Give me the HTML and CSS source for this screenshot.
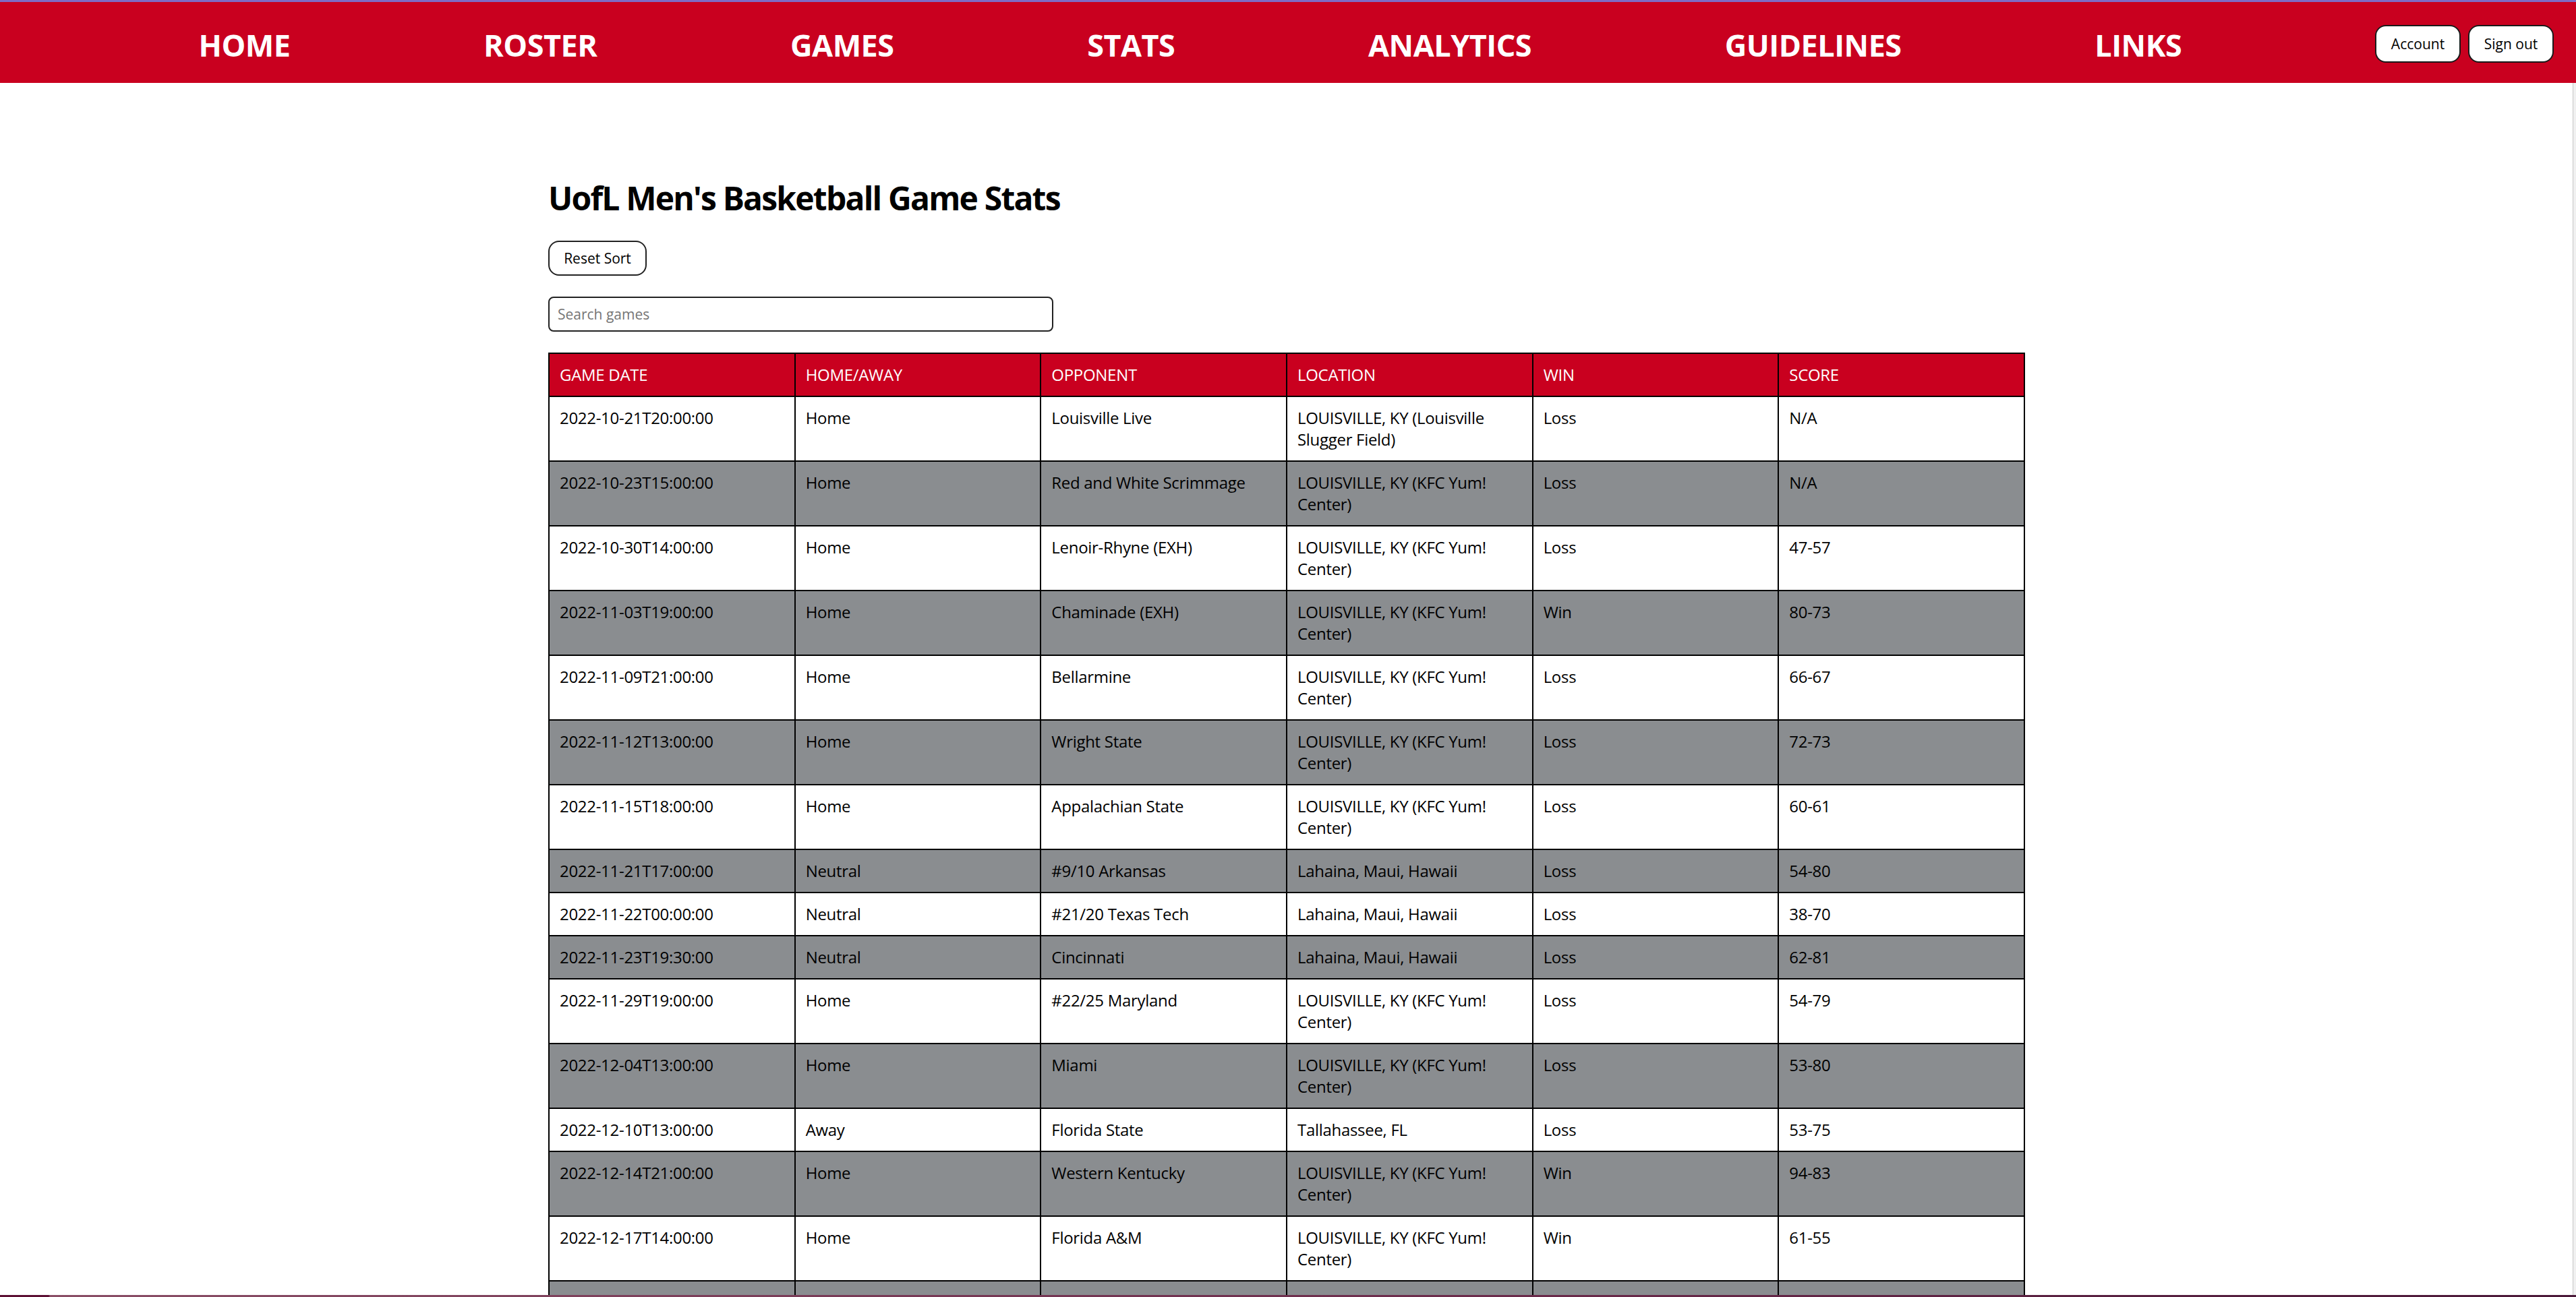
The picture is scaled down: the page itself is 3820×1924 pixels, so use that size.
FILE: index.html
```html
<!DOCTYPE html>
<html lang="en">
<head>
<meta charset="utf-8">
<title>UofL Men's Basketball Game Stats</title>
<link rel="stylesheet" href="styles.css">
</head>
<body>
<header class="topnav">
  <nav class="nav-links">
    <a class="nav-link" href="#">HOME</a>
    <a class="nav-link" href="#">ROSTER</a>
    <a class="nav-link" href="#">GAMES</a>
    <a class="nav-link" href="#">STATS</a>
    <a class="nav-link" href="#">ANALYTICS</a>
    <a class="nav-link" href="#">GUIDELINES</a>
    <a class="nav-link" href="#">LINKS</a>
  </nav>
  <div class="nav-actions">
    <button class="nav-btn">Account</button>
    <button class="nav-btn">Sign out</button>
  </div>
</header>

<div class="content">
<main class="page">
  <h1 class="title">UofL Men's Basketball Game Stats</h1>
  <button class="reset-btn">Reset Sort</button>
  <input class="search" type="text" placeholder="Search games">
  <table class="stats">
    <thead>
      <tr><th>GAME DATE</th><th>HOME/AWAY</th><th>OPPONENT</th><th>LOCATION</th><th>WIN</th><th>SCORE</th></tr>
    </thead>
    <tbody>
      <tr><td>2022-10-21T20:00:00</td><td>Home</td><td>Louisville Live</td><td>LOUISVILLE, KY (Louisville Slugger Field)</td><td>Loss</td><td>N/A</td></tr>
      <tr><td>2022-10-23T15:00:00</td><td>Home</td><td>Red and White Scrimmage</td><td>LOUISVILLE, KY (KFC Yum! Center)</td><td>Loss</td><td>N/A</td></tr>
      <tr><td>2022-10-30T14:00:00</td><td>Home</td><td>Lenoir-Rhyne (EXH)</td><td>LOUISVILLE, KY (KFC Yum! Center)</td><td>Loss</td><td>47-57</td></tr>
      <tr><td>2022-11-03T19:00:00</td><td>Home</td><td>Chaminade (EXH)</td><td>LOUISVILLE, KY (KFC Yum! Center)</td><td>Win</td><td>80-73</td></tr>
      <tr><td>2022-11-09T21:00:00</td><td>Home</td><td>Bellarmine</td><td>LOUISVILLE, KY (KFC Yum! Center)</td><td>Loss</td><td>66-67</td></tr>
      <tr><td>2022-11-12T13:00:00</td><td>Home</td><td>Wright State</td><td>LOUISVILLE, KY (KFC Yum! Center)</td><td>Loss</td><td>72-73</td></tr>
      <tr><td>2022-11-15T18:00:00</td><td>Home</td><td>Appalachian State</td><td>LOUISVILLE, KY (KFC Yum! Center)</td><td>Loss</td><td>60-61</td></tr>
      <tr><td>2022-11-21T17:00:00</td><td>Neutral</td><td>#9/10 Arkansas</td><td>Lahaina, Maui, Hawaii</td><td>Loss</td><td>54-80</td></tr>
      <tr><td>2022-11-22T00:00:00</td><td>Neutral</td><td>#21/20 Texas Tech</td><td>Lahaina, Maui, Hawaii</td><td>Loss</td><td>38-70</td></tr>
      <tr><td>2022-11-23T19:30:00</td><td>Neutral</td><td>Cincinnati</td><td>Lahaina, Maui, Hawaii</td><td>Loss</td><td>62-81</td></tr>
      <tr><td>2022-11-29T19:00:00</td><td>Home</td><td>#22/25 Maryland</td><td>LOUISVILLE, KY (KFC Yum! Center)</td><td>Loss</td><td>54-79</td></tr>
      <tr><td>2022-12-04T13:00:00</td><td>Home</td><td>Miami</td><td>LOUISVILLE, KY (KFC Yum! Center)</td><td>Loss</td><td>53-80</td></tr>
      <tr><td>2022-12-10T13:00:00</td><td>Away</td><td>Florida State</td><td>Tallahassee, FL</td><td>Loss</td><td>53-75</td></tr>
      <tr><td>2022-12-14T21:00:00</td><td>Home</td><td>Western Kentucky</td><td>LOUISVILLE, KY (KFC Yum! Center)</td><td>Win</td><td>94-83</td></tr>
      <tr><td>2022-12-17T14:00:00</td><td>Home</td><td>Florida A&amp;M</td><td>LOUISVILLE, KY (KFC Yum! Center)</td><td>Win</td><td>61-55</td></tr>
      <tr><td>2022-12-21T19:00:00</td><td>Home</td><td>NJIT</td><td>LOUISVILLE, KY (KFC Yum! Center)</td><td>Loss</td><td>57-61</td></tr>
      <tr><td>2022-12-29T19:00:00</td><td>Away</td><td>Clemson</td><td>Clemson, SC</td><td>Loss</td><td>64-83</td></tr>
    </tbody>
  </table>
</main>
</div>

<div class="scroll-strip"></div>
<div class="bottom-strip"></div>
</body>
</html>
```

FILE: styles.css
```css
html, body {
  margin: 0;
  padding: 0;
  background: #ffffff;
}

body {
  font-family: "Open Sans", "Noto Sans", sans-serif;
  font-size: 24px;
  color: #000;
}

.topnav {
  display: flex;
  align-items: center;
  height: 120px;
  border-top: 3px solid #7e6bc6;
  background: #c9001f;
}

.nav-links {
  flex: 1;
  display: flex;
  justify-content: space-evenly;
  align-items: center;
  padding-top: 8px;
  padding-left: 8px;
  box-sizing: border-box;
  height: 100%;
}

.nav-link {
  color: #ffffff;
  text-decoration: none;
  font-weight: 700;
  font-size: 45px;
  line-height: 60px;
  letter-spacing: -0.5px;
}

.nav-actions {
  display: flex;
  gap: 11px;
  padding-right: 33px;
  padding-top: 4px;
}

.nav-btn {
  width: 127px;
  height: 56px;
  border: 2px solid #1a1a1a;
  border-radius: 16px;
  background: #ffffff;
  font-family: "Open Sans", "Noto Sans", sans-serif;
  font-size: 21px;
  color: #000;
  padding: 0;
}

.content {
  padding-right: 4px;
}

.page {
  width: 2190px;
  margin: 0 auto;
  padding-top: 139px;
  display: flex;
  flex-direction: column;
  align-items: flex-start;
  gap: 31px;
}

.title {
  margin: 0;
  font-size: 48px;
  line-height: 64px;
  font-weight: 700;
  letter-spacing: -1.8px;
}

.reset-btn {
  width: 146px;
  height: 52px;
  border: 2px solid #222;
  border-radius: 16px;
  background: #ffffff;
  font-family: "Open Sans", "Noto Sans", sans-serif;
  font-size: 21px;
  color: #000;
  padding: 0;
}

.search {
  width: 749px;
  height: 52px;
  box-sizing: border-box;
  border: 2px solid #222;
  border-radius: 8px;
  padding: 0 12px;
  font-family: "Open Sans", "Noto Sans", sans-serif;
  font-size: 21px;
  color: #000;
  outline: none;
}

.search::placeholder {
  color: #757575;
}

.stats {
  width: 2190px;
  table-layout: fixed;
  border-collapse: collapse;
}

.stats th,
.stats td {
  border: 2px solid #000;
  padding: 15px;
  line-height: 32px;
  text-align: left;
  vertical-align: top;
  font-size: 24px;
  font-weight: 400;
  letter-spacing: -0.3px;
}

.stats th {
  background: #c9001f;
  color: #ffffff;
}

.stats tbody tr:nth-child(odd) td {
  background: #ffffff;
}

.stats tbody tr:nth-child(even) td {
  background: #8a8d90;
}

.scroll-strip {
  position: fixed;
  top: 123px;
  right: 0;
  width: 4px;
  bottom: 0;
  background: #f0f0f0;
  border-left: 1px solid #c8c8c8;
}

.bottom-strip {
  position: fixed;
  left: 0;
  right: 0;
  bottom: 0;
  height: 3px;
  background: linear-gradient(to right, #5c0f33 0, #5c0f33 72px, #8a4e66 74px, #6a2a4a 60%, #4a1838 100%);
}
```
